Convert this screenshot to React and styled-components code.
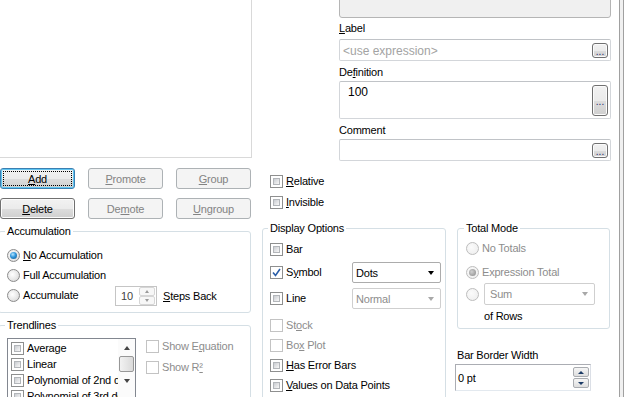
import React from "react"
import styled, { createGlobalStyle } from "styled-components"

const GlobalStyle = createGlobalStyle`
  html, body {
    margin: 0;
    padding: 0;
    background: #fff;
  }
  body {
    font-family: "Liberation Sans", Arial, sans-serif;
    font-size: 11px;
    color: #000;
  }
`

const Window = styled.div`
  display: flex;
  width: 630px;
  height: 397px;
  overflow: hidden;
  background: #fff;
  letter-spacing: -0.2px;
`

const Content = styled.div`
  display: flex;
  width: 619px;
  flex-shrink: 0;
`

const Splitter = styled.div`
  width: 3px;
  flex-shrink: 0;
  border-left: 1px solid #a0a0a0;
  border-right: 1px solid #a0a0a0;
  background: #f0f0f0;
`

const LeftCol = styled.div`
  display: flex;
  flex-direction: column;
  width: 252px;
  flex-shrink: 0;
  & > * {
    flex-shrink: 0;
  }
`

const PreviewPanel = styled.div`
  box-sizing: border-box;
  width: 252px;
  height: 158px;
  border-right: 1px solid #d9d9d9;
  border-bottom: 1px solid #d9d9d9;
`

const ButtonGrid = styled.div`
  display: grid;
  grid-template-columns: repeat(3, 75px);
  grid-auto-rows: 21px;
  column-gap: 13px;
  row-gap: 9px;
  margin-top: 10px;
`

const Button = styled.button`
  position: relative;
  box-sizing: border-box;
  padding: 0;
  font-family: inherit;
  font-size: 11px;
  letter-spacing: -0.2px;
  border-radius: 3px;
  border: 1px solid ${p => (p.disabled ? "#adb2b5" : p.$default ? "#3c7fb1" : "#707070")};
  background: ${p =>
    p.disabled
      ? "#f4f4f4"
      : "linear-gradient(#f2f2f2 0%, #ebebeb 50%, #dddddd 51%, #cfcfcf 100%)"};
  box-shadow: ${p =>
    p.disabled ? "none" : p.$default ? "inset 0 0 0 1px #5fc6f3" : "inset 0 0 0 1px #fbfbfb"};
  color: ${p => (p.disabled ? "#838383" : "#000")};
  &::after {
    content: "";
    display: ${p => (p.$default ? "block" : "none")};
    position: absolute;
    inset: 2px;
    border: 1px dotted #000;
  }
`

const GroupBox = styled.fieldset`
  margin: ${p => p.$margin || "0"};
  padding: ${p => p.$pad};
  border: 1px solid #d5dfe5;
  border-radius: 3px;
  min-width: 0;
  grid-row: ${p => p.$row || "auto"};
  grid-column: ${p => p.$col || "auto"};
`

const Legend = styled.legend`
  padding: 0 2px;
  margin-left: -2px;
  line-height: 13px;
`

const Row = styled.div`
  display: flex;
  align-items: center;
  height: ${p => p.$h || 20}px;
  margin-top: ${p => p.$mt || 0}px;
  margin-left: ${p => p.$ml || 0}px;
`

const Choice = styled.label`
  display: flex;
  align-items: center;
  gap: 3px;
  width: ${p => (p.$w ? `${p.$w}px` : "auto")};
  flex-shrink: 0;
  white-space: nowrap;
  color: ${p => (p.$disabled ? "#8d8d8d" : "#000")};
`

const RadioDot = styled.span`
  position: relative;
  box-sizing: border-box;
  width: 13px;
  height: 13px;
  flex-shrink: 0;
  border-radius: 50%;
  border: 1px solid ${p => (p.$disabled ? "#bdbdbd" : "#8b8b8b")};
  background: ${p =>
    p.$disabled
      ? "radial-gradient(circle at 40% 40%, #fbfbfb 0%, #ececec 100%)"
      : "radial-gradient(circle at 40% 40%, #ffffff 0%, #e8e8e8 55%, #cdcdcd 100%)"};
  &::after {
    content: "";
    display: ${p => (p.$checked ? "block" : "none")};
    position: absolute;
    inset: 2px;
    border-radius: 50%;
    background: ${p =>
      p.$disabled
        ? "radial-gradient(circle at 40% 40%, #d0d0d0 0%, #a4a4a4 60%, #8a8a8a 100%)"
        : "radial-gradient(circle at 40% 35%, #b6e6ff 0%, #2f95db 45%, #185586 100%)"};
  }
`

const CheckBox = styled.span`
  position: relative;
  display: flex;
  align-items: center;
  justify-content: center;
  box-sizing: border-box;
  width: 13px;
  height: 13px;
  flex-shrink: 0;
  border: 1px solid ${p => (p.$disabled ? "#c3c3c3" : "#8e8f8f")};
  background: #fff;
  &::before {
    content: "";
    display: ${p => (p.$disabled || p.$checked ? "none" : "block")};
    position: absolute;
    inset: 2px;
    border: 1px solid #b3b6ba;
    background: linear-gradient(135deg, #c9ccd1 0%, #e4e5e7 55%, #f8f8f8 100%);
  }
  svg {
    display: block;
  }
`

const ChoiceText = styled.span`
  line-height: 13px;
`

const Radio = ({ checked, disabled, children, w }) => (
  <Choice $w={w} $disabled={disabled}>
    <RadioDot $checked={checked} $disabled={disabled} />
    {children && <ChoiceText>{children}</ChoiceText>}
  </Choice>
)

const Check = ({ checked, disabled, children, w }) => (
  <Choice $w={w} $disabled={disabled}>
    <CheckBox $checked={checked} $disabled={disabled}>
      {checked && (
        <svg width="9" height="9" viewBox="0 0 9 9">
          <path d="M1 4.5 L3.5 7.5 L8 1" fill="none" stroke="#2a5ea8" strokeWidth="1.6" />
        </svg>
      )}
    </CheckBox>
    <ChoiceText>{children}</ChoiceText>
  </Choice>
)

const Caret = styled.span`
  width: 0;
  height: 0;
  border-left: ${p => p.$size || 3.5}px solid transparent;
  border-right: ${p => p.$size || 3.5}px solid transparent;
  border-top: ${p => (p.$up ? "none" : `${p.$tall || 4}px solid ${p.$color || "#000"}`)};
  border-bottom: ${p => (p.$up ? `${p.$tall || 4}px solid ${p.$color || "#000"}` : "none")};
`

const Combo = styled.div`
  display: flex;
  align-items: center;
  justify-content: space-between;
  box-sizing: border-box;
  width: ${p => p.$w}px;
  height: ${p => p.$h}px;
  margin-left: ${p => p.$ml || 0}px;
  padding: 0 6px 0 ${p => p.$pl || 3}px;
  border: 1px solid ${p => (p.$disabled ? "#cfcfcf" : "#acacac")};
  border-radius: 2px;
  background: #fff;
  color: ${p => (p.$disabled ? "#8d8d8d" : "#000")};
`

const SpinBox = styled.div`
  display: flex;
  align-items: center;
  box-sizing: border-box;
  width: ${p => p.$w}px;
  height: ${p => p.$h}px;
  margin-left: ${p => p.$ml || 0}px;
  margin-top: ${p => p.$mt || 0}px;
  padding: 0 1px 0 ${p => p.$pl || 5}px;
  border: 1px solid ${p => (p.$disabled ? "#c5c5c5" : "#abadb3")};
  border-bottom-color: ${p => (p.$disabled ? "#c5c5c5" : "#e3e9ef")};
  border-right-color: ${p => (p.$disabled ? "#c5c5c5" : "#dbdfe6")};
  color: ${p => (p.$disabled ? "#444" : "#000")};
  background: #fff;
`

const SpinValue = styled.span`
  flex: 1;
`

const SpinCol = styled.div`
  display: flex;
  flex-direction: column;
  gap: ${p => p.$gap ?? 1}px;
`

const SpinBtn = styled.div`
  display: flex;
  align-items: center;
  justify-content: center;
  box-sizing: border-box;
  width: 16px;
  height: ${p => p.$h}px;
  border: 1px solid ${p => (p.$disabled ? "#d6d6d6" : "#a9acb0")};
  border-radius: 2px;
  background: ${p => (p.$disabled ? "#f7f7f7" : "linear-gradient(#f6f6f6, #dedede)")};
`

const StepsText = styled.span`
  margin-left: 6px;
`

const ListBox = styled.div`
  display: flex;
  box-sizing: border-box;
  width: 129px;
  height: 62px;
  border: 1px solid #828790;
  flex-shrink: 0;
`

const ListItems = styled.div`
  flex: 1;
  min-width: 0;
  padding-top: 1px;
`

const ListItem = styled.div`
  display: flex;
  align-items: center;
  gap: 3px;
  height: 16px;
  padding-left: 3px;
  white-space: nowrap;
  overflow: hidden;
`

const ScrollBar = styled.div`
  display: flex;
  flex-direction: column;
  align-items: center;
  width: 17px;
  background: #fbfbfb;
`

const ScrollArrow = styled.div`
  display: flex;
  align-items: center;
  justify-content: center;
  height: 17px;
  width: 17px;
`

const ScrollThumb = styled.div`
  box-sizing: border-box;
  width: 15px;
  height: 16px;
  border: 1px solid #979797;
  border-radius: 2px;
  background: linear-gradient(90deg, #f2f2f2, #dadada);
`

const TrendBody = styled.div`
  display: flex;
`

const TrendOptions = styled.div`
  display: flex;
  flex-direction: column;
  margin-left: 10px;
`

const RightArea = styled.div`
  flex: 1;
  display: flex;
  flex-direction: column;
  & > * {
    flex-shrink: 0;
  }
`

const Fields = styled.div`
  display: flex;
  flex-direction: column;
  margin: 0 8px 0 87px;
`

const ReadOnlyBox = styled.div`
  box-sizing: border-box;
  height: 19px;
  margin-top: -1px;
  border: 1px solid #b5b5b5;
  border-radius: 0 0 3px 3px;
  background: #f0f0f0;
`

const FieldLabel = styled.div`
  line-height: 13px;
  margin-top: ${p => p.$mt}px;
`

const TextField = styled.div`
  display: flex;
  align-items: stretch;
  box-sizing: border-box;
  height: ${p => p.$h}px;
  margin-top: ${p => p.$mt || 0}px;
  padding: 3px 2px 2px 3px;
  border: 1px solid #d3d6da;
  border-top-color: #c0c3c7;
  border-radius: 2px;
  background: #fff;
`

const FieldText = styled.span`
  flex: 1;
  align-self: ${p => (p.$top ? "flex-start" : "center")};
  padding-left: ${p => p.$pl || 0}px;
  font-size: 12px;
  line-height: 14px;
  letter-spacing: 0;
  color: ${p => (p.$placeholder ? "#a3a3a3" : "#000")};
`

const EllipsisButton = styled.div`
  display: flex;
  align-items: center;
  justify-content: center;
  box-sizing: border-box;
  width: 16px;
  border: 1px solid #707070;
  border-radius: 3px;
  background: linear-gradient(#f2f2f2 0%, #ebebeb 50%, #dddddd 51%, #cfcfcf 100%);
  box-shadow: inset 0 0 0 1px #fbfbfb;
  font-size: 10px;
  line-height: 10px;
  padding-top: 3px;
  color: #2a2a6a;
  letter-spacing: 0;
`

const LowerGrid = styled.div`
  display: grid;
  grid-template-columns: 184px 153px;
  column-gap: 11px;
  align-items: start;
  margin: 10px 0 0 10px;
`

const TopChecks = styled.div`
  grid-row: 1;
  grid-column: 1;
  display: flex;
  flex-direction: column;
  gap: 1px;
  padding-left: 8px;
  margin-bottom: 10px;
`

const TotalCol = styled.div`
  grid-row: 2;
  grid-column: 2;
  display: flex;
  flex-direction: column;
`

const SmallLabel = styled.div`
  line-height: 13px;
  margin-top: ${p => p.$mt || 0}px;
  margin-left: ${p => p.$ml || 0}px;
`

const trendItems = ["Average", "Linear", "Polynomial of 2nd degree", "Polynomial of 3rd degree"]

const App = () => {
  return (
    <>
      <GlobalStyle />
      <Window>
        <Content>
          <LeftCol>
            <PreviewPanel />
            <ButtonGrid>
              <Button $default>
                <u>A</u>dd
              </Button>
              <Button disabled>
                <u>P</u>romote
              </Button>
              <Button disabled>
                <u>G</u>roup
              </Button>
              <Button>
                <u>D</u>elete
              </Button>
              <Button disabled>
                De<u>m</u>ote
              </Button>
              <Button disabled>
                <u>U</u>ngroup
              </Button>
            </ButtonGrid>

            <GroupBox $margin="6px 1px 0 -2px" $pad="7px 0 6px 8px">
              <Legend>Accumulation</Legend>
              <Row>
                <Radio checked>
                  <u>N</u>o Accumulation
                </Radio>
              </Row>
              <Row>
                <Radio>Full Accumulation</Radio>
              </Row>
              <Row $h={21}>
                <Radio w={108}>Accumulate</Radio>
                <SpinBox $w={42} $h={20} $disabled>
                  <SpinValue>10</SpinValue>
                  <SpinCol $gap={0}>
                    <SpinBtn $h={9} $disabled>
                      <Caret $up $size={2.5} $tall={3} $color="#9a9a9a" />
                    </SpinBtn>
                    <SpinBtn $h={9} $disabled>
                      <Caret $size={2.5} $tall={3} $color="#9a9a9a" />
                    </SpinBtn>
                  </SpinCol>
                </SpinBox>
                <StepsText>
                  <u>S</u>teps Back
                </StepsText>
              </Row>
            </GroupBox>

            <GroupBox $margin="6px 1px 0 -2px" $pad="6px 0 20px 8px">
              <Legend>Trendlines</Legend>
              <TrendBody>
                <ListBox>
                  <ListItems>
                    {trendItems.map(item => (
                      <ListItem key={item}>
                        <CheckBox />
                        <span>{item}</span>
                      </ListItem>
                    ))}
                  </ListItems>
                  <ScrollBar>
                    <ScrollArrow>
                      <Caret $up $size={3.5} $tall={4} $color="#444" />
                    </ScrollArrow>
                    <ScrollThumb />
                    <ScrollArrow>
                      <Caret $size={3.5} $tall={4} $color="#444" />
                    </ScrollArrow>
                  </ScrollBar>
                </ListBox>
                <TrendOptions>
                  <Row $h={16}>
                    <Check disabled>
                      Show E<u>q</u>uation
                    </Check>
                  </Row>
                  <Row $h={16} $mt={5}>
                    <Check disabled>
                      Show R<u>²</u>
                    </Check>
                  </Row>
                </TrendOptions>
              </TrendBody>
            </GroupBox>
          </LeftCol>

          <RightArea>
            <Fields>
              <ReadOnlyBox />
              <FieldLabel $mt={4}>
                <u>L</u>abel
              </FieldLabel>
              <TextField $h={22} $mt={4}>
                <FieldText $placeholder>&lt;use expression&gt;</FieldText>
                <EllipsisButton>...</EllipsisButton>
              </TextField>
              <FieldLabel $mt={5}>
                De<u>f</u>inition
              </FieldLabel>
              <TextField $h={38} $mt={2}>
                <FieldText $top $pl={5}>
                  100
                </FieldText>
                <EllipsisButton>...</EllipsisButton>
              </TextField>
              <FieldLabel $mt={5}>Comment</FieldLabel>
              <TextField $h={22} $mt={2}>
                <FieldText />
                <EllipsisButton>...</EllipsisButton>
              </TextField>
            </Fields>

            <LowerGrid>
              <TopChecks>
                <Row>
                  <Check>
                    <u>R</u>elative
                  </Check>
                </Row>
                <Row>
                  <Check>
                    <u>I</u>nvisible
                  </Check>
                </Row>
              </TopChecks>

              <GroupBox $row={2} $col={1} $pad="4px 4px 40px 7px">
                <Legend>Display Options</Legend>
                <Row>
                  <Check>Bar</Check>
                </Row>
                <Row $h={21} $mt={3}>
                  <Check checked w={82}>
                    S<u>y</u>mbol
                  </Check>
                  <Combo $w={89} $h={21}>
                    Dots
                    <Caret />
                  </Combo>
                </Row>
                <Row $h={21} $mt={5}>
                  <Check w={82}>Line</Check>
                  <Combo $w={89} $h={21} $disabled>
                    Normal
                    <Caret $color="#a8a8a8" />
                  </Combo>
                </Row>
                <Row $mt={6}>
                  <Check disabled>
                    St<u>o</u>ck
                  </Check>
                </Row>
                <Row>
                  <Check disabled>
                    Bo<u>x</u> Plot
                  </Check>
                </Row>
                <Row>
                  <Check>
                    <u>H</u>as Error Bars
                  </Check>
                </Row>
                <Row>
                  <Check>
                    <u>V</u>alues on Data Points
                  </Check>
                </Row>
              </GroupBox>

              <TotalCol>
                <GroupBox $pad="3px 4px 5px 8px">
                  <Legend>Total Mode</Legend>
                  <Row>
                    <Radio disabled>No Totals</Radio>
                  </Row>
                  <Row $mt={4}>
                    <Radio disabled checked>
                      Expression Total
                    </Radio>
                  </Row>
                  <Row $h={22} $mt={1}>
                    <Radio disabled />
                    <Combo $w={111} $h={22} $ml={5} $pl={5} $disabled>
                      Sum
                      <Caret $color="#a8a8a8" />
                    </Combo>
                  </Row>
                  <SmallLabel $mt={5} $ml={18}>
                    of Rows
                  </SmallLabel>
                </GroupBox>
                <SmallLabel $mt={20}>Bar Border Width</SmallLabel>
                <SpinBox $w={136} $h={27} $ml={-2} $mt={2} $pl={2}>
                  <SpinValue>0 pt</SpinValue>
                  <SpinCol>
                    <SpinBtn $h={10}>
                      <Caret $up $size={3} $tall={3} $color="#1b3b66" />
                    </SpinBtn>
                    <SpinBtn $h={10}>
                      <Caret $size={3} $tall={3} $color="#1b3b66" />
                    </SpinBtn>
                  </SpinCol>
                </SpinBox>
              </TotalCol>
            </LowerGrid>
          </RightArea>
        </Content>
        <Splitter />
      </Window>
    </>
  )
}

export default App
